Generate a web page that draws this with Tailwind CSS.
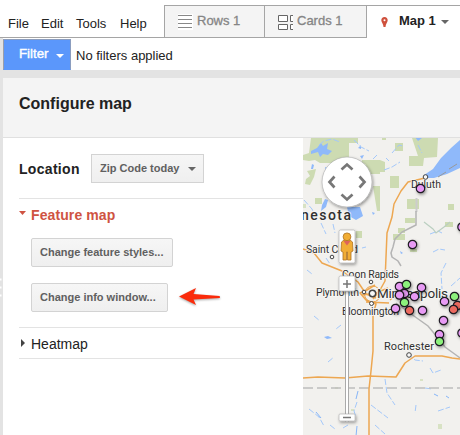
<!DOCTYPE html>
<html lang="en">
<head>
<meta charset="utf-8">
<title>Configure map</title>
<script src="https://cdn.jsdelivr.net/npm/@tailwindcss/browser@4"></script>
</head>
<body class="relative w-[460px] h-[435px] overflow-hidden bg-[#e3e3e3] font-['Liberation_Sans',Arial,sans-serif] text-[#222] flex flex-col">
<header class="h-[38px] shrink-0 flex bg-white text-[13px]">
  <nav class="w-[164px] shrink-0 flex border-b border-[#a5a5a5] pt-[14px] leading-[20px]">
    <span class="w-[33px] ml-2">File</span><span class="w-[35px]">Edit</span><span class="w-[44px]">Tools</span><span>Help</span>
  </nav>
  <div class="mt-[5px] h-[33px] flex grow border-t border-[#a5a5a5] text-[13px]">
    <div class="w-[100px] h-[32px] border-l border-b border-[#a5a5a5] bg-[#f4f4f4] flex pl-[13px] pt-[6px] leading-[18px] text-[#858585] [-webkit-text-stroke:0.3px_#858585]">
      <svg class="mt-[2px] mr-[4px] bg-white" width="15" height="16" viewBox="0 0 15 16"><path d="M0 1.5h14M0 5.5h14M0 9.5h14M0 13.5h14" stroke="#888"/></svg><span>Rows 1</span>
    </div>
    <div class="w-[103px] h-[32px] border-x border-b border-[#a5a5a5] bg-[#f4f4f4] flex pl-[13px] pt-[6px] leading-[18px] text-[#858585] [-webkit-text-stroke:0.3px_#858585]">
      <svg class="mt-[2px] mr-[4px]" width="15" height="16" viewBox="0 0 15 16"><path d="M.5 1.5h9v6h-9zM.5 10.5h9v5h-9zM15 1.5h-2.500v6H15M15 10.500h-2.500v5H15" fill="#fff" stroke="#666"/></svg><span>Cards 1</span>
    </div>
    <div class="flex pl-[14px] pt-[6px] leading-[18px] font-bold text-[13px]">
      <svg class="mt-[5px] mr-[11px]" width="7" height="10" viewBox="0 0 7 10"><path d="M3.500 0C1.500 0 .3 1.400.3 3.200c0 2 2.200 3.500 2.200 6.800h2c0-3.300 2.200-4.800 2.200-6.800C6.700 1.400 5.500 0 3.500 0" fill="#cf513d"/><circle cx="3.500" cy="3.200" r="1" fill="#fff"/></svg>
      <span class="w-[42px]">Map 1</span><svg class="mt-[8px]" width="8" height="4" viewBox="0 0 8 4"><path d="M0 0h8L4 4z" fill="#666"/></svg>
    </div>
  </div>
</header>
<div class="ml-[3px] h-[32px] shrink-0 bg-white flex pt-px">
  <div class="w-[68px] h-[31px] bg-[#5b97fb] border border-l-[#9a9eaa] border-t-[#8b9dbf] border-r-[#8b9dbf] border-b-[#5b97fb] text-white flex pl-[15px] pt-[5px] text-[13.300px] leading-[18px]">
    <span class="w-[37px] [-webkit-text-stroke:0.4px_white]">Filter</span><svg class="mt-[9px]" width="8" height="4" viewBox="0 0 8 4"><path d="M0 0h8L4 4z" fill="#fff"/></svg>
  </div>
  <span class="ml-[5px] mt-[8px] text-[13px] leading-[18px]">No filters applied</span>
</div>
<main class="mt-[8px] ml-[3px] grow flex flex-col bg-white">
  <div class="h-[60px] shrink-0 bg-[#f4f4f4] border-b border-[#e0e0e0] pl-[16px] pt-[16px]"><h1 class="font-bold text-[16px] leading-[20px]">Configure map</h1></div>
  <div class="flex">
    <section class="w-[300px] shrink-0 pl-[16px]">
      <div class="flex h-[61px] pt-[16px] border-b border-[#e3e3e3]">
        <h2 class="w-[72px] pt-[5px] font-bold text-[14px] leading-[20px] tracking-[0.3px]">Location</h2>
        <div class="w-[113px] h-[29px] border border-[#d3d3d3] bg-linear-to-b from-[#f6f6f6] to-[#efefef] flex pl-[8px] pt-[5px] text-[11px] leading-[17px] font-bold text-[#606060]"><span class="w-[88px]">Zip Code today</span><svg class="mt-[7px]" width="8" height="4" viewBox="0 0 8 4"><path d="M0 0h8L4 4z" fill="#666"/></svg></div>
      </div>
      <div class="h-[129px] border-b border-[#e3e3e3]">
        <div class="flex pt-[6px] leading-[20px] text-[14px] tracking-[0.1px] font-bold text-[#cf5342]"><svg class="mt-[6px] mr-[5px]" width="7" height="4" viewBox="0 0 7 4"><path d="M0 0h7L3.500 4z" fill="#cf5342"/></svg>Feature map</div>
        <div class="ml-[12px] mt-[13px] w-[142px] h-[29px] rounded-[2px] border border-[#d3d3d3] bg-linear-to-b from-[#f6f6f6] to-[#efefef] pl-[8px] text-[11px] leading-[27px] font-bold text-[#606060] whitespace-nowrap">Change feature styles...</div>
        <div class="flex ml-[12px] mt-[16px]"><div class="w-[137px] h-[29px] rounded-[2px] border border-[#d3d3d3] bg-linear-to-b from-[#f6f6f6] to-[#efefef] pl-[8px] text-[11px] leading-[27px] font-bold text-[#606060] whitespace-nowrap">Change info window...</div>
        <svg class="ml-[10px] mt-[4px] drop-shadow-[0_1px_1px_rgba(0,0,0,0.35)]" width="43" height="20" viewBox="0 0 43 20"><path d="M1 9.500L18 1l-2.500 6L41.500 9q1.300 1.300 0 2L15.500 12.500 18 18z" fill="#fb2b0b"/></svg></div>
      </div>
      <div class="flex h-[31px] border-b border-[#e3e3e3] pt-[6px] leading-[20px] text-[14px]"><svg class="mt-[5px] ml-[2px] mr-[6px]" width="4" height="8" viewBox="0 0 4 8"><path d="M0 0v8l4-4z" fill="#444"/></svg>Heatmap</div>
    </section>
    <svg width="157" height="298" viewBox="303 138 157 298" style="font-family:Roboto,sans-serif">
      <defs>
        <filter id="sh" x="-60%" y="-60%" width="240%" height="240%"><feDropShadow dx="1" dy="1.500" stdDeviation="1.800" flood-opacity=".4"/></filter>
        <g id="dot"><circle r="4.200" stroke="#1d1a20" stroke-width="1.200" filter="url(#sh)"/></g>
      </defs>
      <path fill="#f2f1ee" d="M303 138h157v298H303z"/>
      <g fill="#cddbb2">
        <path d="M311 138h38v25h-29l-5-3-6 1-6-1v-5l6-2zM349 138h9v5h-9zM307 171l9-2-2 8-4 8-5-1 1-5 4-3zM315 198h7v6h-7zM362 160h18v14h-18zM373 186h7v25h-3zM380 160l5 2v10h-5zM412 138h26l-1 19-13 1-1 8h-14v-10h9zM395 143h8v8h-8zM390 176h9v12h-9zM407 199h12v10h-12zM449 151h6v6h-6zM448 204h6v6h-6zM405 218h10v5h-10zM398 228h7v5h-7zM393 234h12v6h-12zM445 222h8v5h-8zM356 231h6v7h-6zM382 138h4v2h-4zM410 249h7v3h-7z"/>
        <path d="M303 204h3v4h-3zM335 387h3v2h-3zM351 409h3v2h-3zM438 424h4v5h-4zM420 379h3v2h-3z" opacity=".7"/>
      </g>
      <g fill="#8fb9fa">
        <path d="M311 151l6-3 4-5 2 3 5-3-1 6 5 2-4 4-5-1-3 3-2-5-7 2zM424 175l9-6 8-11 10-10 9-8v28l-13 6-13 4-9 0zM325 199l3 1-2 7-5 4 1-6zM347 207h13l3 9-7 4-7-4z"/>
        <path d="M358 148l3-3v4zM360 156l4-1-2 4zM325 167l3 1-2 4zM312 164l2 1-1 4h-2zM324 337l4-1 4 2-5 1zM372 212l3 1-2 2zM400 251l3 2-2 1zM442 320l2 2-3 1zM352 260l3 1-3 2zM415 137l7 1-4 3z"/>
      </g>
      <g fill="none" stroke="#a4c8fa" stroke-width="1">
        <path d="M304 200l8 9 3 7M319 145l5-4 8-2 8 3M354 140l7 7 8 4M377 155l-4 4M384 170l8-3 8-5M392 153l7-8 4 1M321 223l5 11M333 224l2 9M307 270l5 4M326 258l4 6M446 263l-5 10 1 16M433 252l6-3 6 1M451 286l9-8M430 234l8-3 4 2M362 248l4-1M418 145l4 8M386 158l3 3M309 409l10 8 5 9M328 362l6-5M357 402l-3 9 2 6M385 379l2 14 8 12M371 405l17 13M375 425l10 9M416 405l-1 8M430 368l3 5 8-3M438 411l12-4M330 425l5 4M343 428l5-3M314 316l6 5M341 325l-5 4M408 354l7 6 8 1M425 388l7 1" stroke-dasharray="6 2"/>
        <path d="M316 412l5 6M446 396l3 2M358 391l-2 8M434 394l4 2M357 426l-1 10" stroke="#86b5f8"/>
        <path d="M424 222l9 7 3 4 8-6 6-5" stroke="#bbcfc0" stroke-width="1.200"/>
      </g>
      <path d="M416.500 198v14" stroke="#ccc" stroke-width="2"/>
      <path d="M438 177l8-5M449 169l8-5" stroke="#999" fill="none"/>
      <path d="M416 211v14l-6 3-8 4-7 7-2 8-2 6 1 4 6 4 3 5M396 303l18 13 14 10 10 12 7 9 11 8 4 3" fill="none" stroke="#b4b4b4" stroke-width="1.500"/>
      <path d="M303 388h157" stroke="#bdbdbd" stroke-width="1.400" stroke-dasharray="10 4"/>
      <g fill="none" stroke="#eda751" stroke-width="1.500" stroke-linejoin="round">
        <path d="M425 178l-17 4-7 9-7 13-2 13-5 16-2 48-5 9-7 9M303 249l11 4 8 10 20 8 16 11 8 12 10 4M303 378l15-1 27 1 23-2 28 1 9-14 10-7 27 0 10 2 8 1M375 285l-8 5-7 3 6 7 10 4-3 10 0 20 0 17-2 20-2 18v46l-4 9M362 295l14-2 12-5M366 302l23 1M390 300l10-9"/>
      </g>
      <g fill="none" stroke="#e8a14a"><circle cx="372.500" cy="294" r="8"/></g>
      <g fill="#303030" stroke="#f8f7f4" stroke-width="1.500" paint-order="stroke" font-size="10.500">
        <text x="301" y="220" font-size="14" font-weight="500" textLength="50">nesota</text>
        <text x="411" y="187.500" textLength="30">Duluth</text>
        <text x="306" y="253" textLength="52">Saint Cloud</text>
        <text x="342" y="278" textLength="57">Coon Rapids</text>
        <text x="316" y="296" textLength="43">Plymouth</text>
        <text x="342" y="314.500" textLength="57">Bloomington</text>
        <text x="377" y="298" font-size="13.500" textLength="71">Minneapolis</text>
        <text x="384" y="349.500" font-size="11" textLength="50">Rochester</text>
      </g>
      <g fill="#f8f8f8" stroke="#444">
        <circle cx="425.500" cy="177" r="2.300"/><circle cx="332" cy="257" r="1.800"/><circle cx="371" cy="282" r="1.800"/><circle cx="364" cy="292" r="1.800"/><circle cx="371.500" cy="303.500" r="2"/><circle cx="372.500" cy="293.500" r="3.200" stroke-width="1.400"/><circle cx="409" cy="355" r="2.300"/>
      </g>
      <g fill="#e79af4">
        <use href="#dot" x="420.500" y="188.500"/><use href="#dot" x="412.500" y="244.500"/><use href="#dot" x="462" y="227"/><use href="#dot" x="399.500" y="286.500"/><use href="#dot" x="421.500" y="287.500"/><use href="#dot" x="404.500" y="293.500"/><use href="#dot" x="399.500" y="295"/><use href="#dot" x="414.500" y="296.500"/><use href="#dot" x="395.500" y="308.500"/><use href="#dot" x="422.500" y="310.500"/><use href="#dot" x="444.500" y="301.500"/><use href="#dot" x="443.500" y="320.500"/><use href="#dot" x="439.500" y="334.500"/><use href="#dot" x="462" y="333"/>
      </g>
      <g fill="#8cf17c"><use href="#dot" x="406.500" y="284.500"/><use href="#dot" x="404.500" y="302.500"/><use href="#dot" x="454.500" y="296.500"/><use href="#dot" x="439.500" y="341.500"/></g>
      <g fill="#ec6a5e"><use href="#dot" x="409.500" y="310.500"/><use href="#dot" x="457.500" y="305.500"/><use href="#dot" x="453.500" y="309.500"/></g>
      <path d="M345.500 291h3v145h-3z" fill="#fff" stroke="#aaa" clip-path="inset(0 0 15px 0)"/>
      <g fill="#fff" stroke="#aaa" stroke-width=".6" filter="url(#sh)">
        <circle cx="347" cy="182" r="25"/><rect x="339" y="230" width="16" height="33" rx="1.500"/><rect x="339" y="276" width="16" height="15" rx="1.500"/><rect x="339" y="414" width="16" height="7" rx="1"/>
      </g>
      <path d="M341.500 169.500l5.500-5 5.500 5M341.500 194.500l5.500 5 5.500-5M334.500 176.500l-5 5.500 5 5.500M359.500 176.500l5 5.500-5 5.500" fill="none" stroke="#777" stroke-width="2.700"/>
      <path d="M343 284h8M347 280v8M343 417.500h8" stroke="#777" stroke-width="1.500"/>
      <g fill="#f1ad35" stroke="#ad7120" stroke-width=".8"><path d="M341.500 242l2.500-2h6l2.500 2 .5 9-2 1v8h-3.500V252h-1v8H343V252l-2-1z"/><circle cx="347" cy="236.800" r="3.900"/></g>
      <path d="M343.500 241h7l-3.500 4.500z" fill="#dd645b"/>
    </svg>
  </div>
</main>
<svg class="absolute left-0 top-[278px]" width="2" height="20" viewBox="0 0 2 20"><path d="M0 1.500h1.500M0 9.500h1.500M0 17.500h1.500" stroke="#fff" stroke-width="2"/></svg>
</body>
</html>
